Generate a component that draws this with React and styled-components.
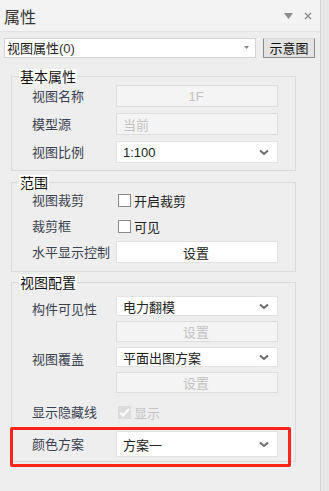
import React from "react";
import styled, { createGlobalStyle } from "styled-components";

const Global = createGlobalStyle`
  html, body { margin: 0; padding: 0; background: #eeeeee; }
  body { font-family: "Noto Sans CJK SC", "Noto Sans", sans-serif; }
  * { box-sizing: border-box; }
`;

const Shell = styled.div`
  width: 329px;
  height: 491px;
  display: flex;
  background: #eeeeee;
  overflow: hidden;
`;

const Main = styled.div`
  width: 320px;
  display: flex;
  flex-direction: column;
  position: relative;
`;

const Strip = styled.div`
  width: 9px;
  background: #e8e8e8;
  border-left: 1px solid #d6d6d6;
`;

const Header = styled.div`
  height: 32px;
  flex-shrink: 0;
  display: flex;
  align-items: center;
  justify-content: space-between;
  padding: 0 8px 0 4px;
  background: #f3f3f3;
  border-bottom: 1px solid #e2e2e2;
`;

const Title = styled.div`
  font-size: 16px;
  color: #333;
  line-height: 20px;
`;

const HeaderIcons = styled.div`
  display: flex;
  align-items: center;
  gap: 11px;
  color: #8a8a8a;
`;

const Toolbar = styled.div`
  display: flex;
  flex-shrink: 0;
  align-items: center;
  gap: 7px;
  padding: 5px 0 0 4px;
  height: 26px;
`;

const TopSelect = styled.div`
  width: 252px;
  height: 20px;
  background: #fff;
  border: 1px solid #d4d4d4;
  display: flex;
  align-items: center;
  justify-content: space-between;
  padding: 0 6px 0 2px;
  font-size: 13px;
  color: #222;
`;

const Paren = styled.span`
  font-family: "Liberation Sans", sans-serif;
  color: #333;
`;

const TopButton = styled.div`
  width: 52px;
  height: 20px;
  background: #e3e3e3;
  border: 1px solid #8a8a8a;
  border-top-color: #d8d8d8;
  display: flex;
  align-items: center;
  justify-content: center;
  font-size: 13px;
  color: #111;
`;

const Group = styled.fieldset`
  margin: ${(p) => p.$top}px 0 0 11px;
  width: 285px;
  flex-shrink: 0;
  border: 1px solid #dadada;
  padding: ${(p) => p.$padTop}px 17px ${(p) => p.$padBottom}px 20px;
  display: flex;
  flex-direction: column;
  gap: ${(p) => p.$gap}px;
  min-width: 0;
`;

const Legend = styled.legend`
  margin-left: -13px;
  padding: 0 1px;
  background: #fff;
  font-size: 14px;
  line-height: 14px;
  height: 14px;
  color: #111;
`;

const Row = styled.div`
  display: flex;
  align-items: center;
  height: ${(p) => p.$h || 22}px;
`;

const Label = styled.div`
  width: 84px;
  font-size: 13px;
  color: #3a4150;
  line-height: 16px;
  padding-top: ${(p) => p.$dy || 0}px;
`;

const Field = styled.div`
  width: 162px;
  height: ${(p) => p.$h || 22}px;
  display: flex;
  align-items: center;
  justify-content: ${(p) => (p.$center ? "center" : "space-between")};
  padding: 0 8px 0 6px;
  font-size: 13px;
  background: ${(p) => (p.$disabled ? "#f4f4f4" : "#fff")};
  border: 1px solid ${(p) => (p.$disabled ? "#dddddd" : "#e2e2e2")};
  color: ${(p) => (p.$disabled ? "#c2c2c2" : "#222")};
  font-family: ${(p) => (p.$latin ? '"Liberation Sans", sans-serif' : "inherit")};
`;

const Spacer = styled.div`
  width: 84px;
`;

const CheckWrap = styled.div`
  display: flex;
  align-items: center;
  gap: 3px;
  padding-left: 2px;
  font-size: 13px;
  color: ${(p) => (p.$disabled ? "#c4c4c4" : "#222")};
`;

const Box = styled.div`
  width: 13px;
  height: 13px;
  border: 1px solid ${(p) => (p.$disabled ? "#dcdcdc" : "#8a8a8a")};
  background: ${(p) => (p.$disabled ? "#dcdcdc" : "#fff")};
  display: flex;
  align-items: center;
  justify-content: center;
`;

const Highlight = styled.div`
  position: absolute;
  left: 10px;
  top: 427px;
  width: 281px;
  height: 40px;
  border: 3px solid #ff2319;
  border-radius: 2px;
  pointer-events: none;
`;

const Chevron = () => (
  <svg width="10" height="7" viewBox="0 0 10 7">
    <path d="M1 1.5 L5 5 L9 1.5" fill="none" stroke="#6a6a6a" strokeWidth="2" />
  </svg>
);

const SelectField = ({ children, h, latin }) => (
  <Field $h={h} $latin={latin}>
    <span>{children}</span>
    <Chevron />
  </Field>
);

export default function App() {
  return (
    <>
      <Global />
      <Shell>
        <Main>
          <Header>
            <Title>属性</Title>
            <HeaderIcons>
              <svg width="9" height="6" viewBox="0 0 9 6">
                <path d="M0 0 H9 L4.5 6 Z" fill="#8a8a8a" />
              </svg>
              <svg width="8" height="8" viewBox="0 0 8 8">
                <path d="M1 1 L7 7 M7 1 L1 7" stroke="#8a8a8a" strokeWidth="1.4" />
              </svg>
            </HeaderIcons>
          </Header>
          <Toolbar>
            <TopSelect>
              <span>
                视图属性<Paren>(0)</Paren>
              </span>
              <svg width="5" height="3" viewBox="0 0 5 3">
                <path d="M0 0 H5 L2.5 3 Z" fill="#888" />
              </svg>
            </TopSelect>
            <TopButton>示意图</TopButton>
          </Toolbar>

          <Group $top={11} $padTop={2} $padBottom={7} $gap={6}>
            <Legend>基本属性</Legend>
            <Row>
              <Label>视图名称</Label>
              <Field $disabled $center $latin>1F</Field>
            </Row>
            <Row>
              <Label>模型源</Label>
              <Field $disabled>当前</Field>
            </Row>
            <Row>
              <Label>视图比例</Label>
              <SelectField latin>1:100</SelectField>
            </Row>
          </Group>

          <Group $top={4} $padTop={0} $padBottom={8} $gap={4}>
            <Legend>范围</Legend>
            <Row>
              <Label>视图裁剪</Label>
              <CheckWrap>
                <Box />
                开启裁剪
              </CheckWrap>
            </Row>
            <Row>
              <Label>裁剪框</Label>
              <CheckWrap>
                <Box />
                可见
              </CheckWrap>
            </Row>
            <Row>
              <Label>水平显示控制</Label>
              <Field $center>设置</Field>
            </Row>
          </Group>

          <Group $top={3} $padTop={7} $padBottom={4} $gap={5}>
            <Legend>视图配置</Legend>
            <Row $h={20}>
              <Label $dy={6}>构件可见性</Label>
              <SelectField h={20}>电力翻模</SelectField>
            </Row>
            <Row $h={21}>
              <Spacer />
              <Field $h={21} $disabled $center>设置</Field>
            </Row>
            <Row $h={20}>
              <Label $dy={4}>视图覆盖</Label>
              <SelectField h={20}>平面出图方案</SelectField>
            </Row>
            <Row $h={21}>
              <Spacer />
              <Field $h={21} $disabled $center>设置</Field>
            </Row>
            <Row $h={28}>
              <Label>显示隐藏线</Label>
              <CheckWrap $disabled>
                <Box $disabled>
                  <svg width="11" height="9" viewBox="0 0 11 9">
                    <path d="M1 4.5 L4 7.5 L10 1" fill="none" stroke="#fff" strokeWidth="2" />
                  </svg>
                </Box>
                显示
              </CheckWrap>
            </Row>
            <Row $h={26}>
              <Label $dy={-2}>颜色方案</Label>
              <SelectField h={26}>方案一</SelectField>
            </Row>
          </Group>
          <Highlight />
        </Main>
        <Strip />
      </Shell>
    </>
  );
}
